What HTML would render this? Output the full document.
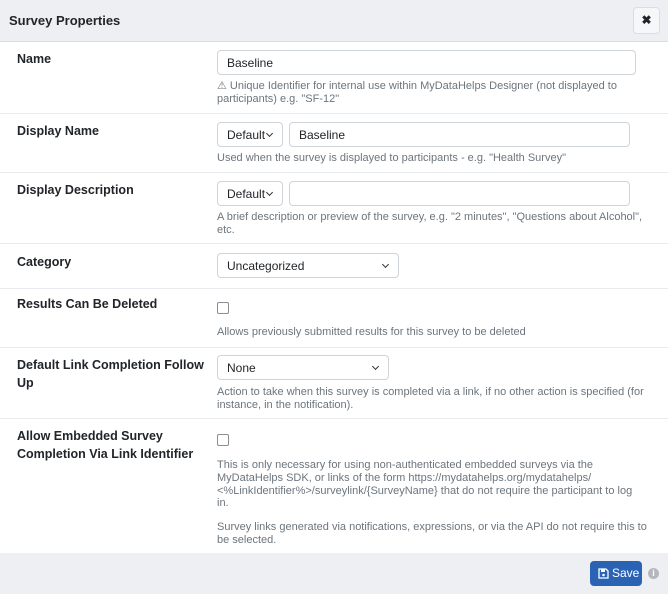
<!DOCTYPE html>
<html><head><style>
*{box-sizing:border-box;margin:0;padding:0}
body{width:668px;height:594px;background:#fff;font-family:"Liberation Sans",sans-serif;position:relative;overflow:hidden;color:#212529}
.a{position:absolute}
.hdr{left:0;top:0;width:668px;height:42px;background:#eeeff3;border-bottom:1px solid #dcdde2}
.ftr{left:0;top:553px;width:668px;height:41px;background:#eeeff3}
.lbl{left:17px;font-weight:bold;font-size:12.5px;line-height:17.5px;color:#212529}
.inp{border:1px solid #ced4da;border-radius:4px;height:25px;font-size:12px;line-height:24px;padding-left:9px;background:#fff}
.sel::after{content:"";position:absolute;right:10px;top:8px;width:4px;height:4px;border-right:1.5px solid #333;border-bottom:1.5px solid #333;transform:rotate(45deg)}
.hlp{left:217px;font-size:11px;line-height:12.8px;color:#6c757d;width:450px;white-space:nowrap}
.sep{left:0;width:668px;height:1px;background:#e9eaee}
.cb{left:217px;width:12px;height:12px;border:1px solid #8a8d92;border-radius:2px}
</style></head><body>
<div class="a hdr"></div>
<div class="a" style="left:9px;top:13px;font-weight:bold;font-size:13px">Survey Properties</div>
<div class="a" style="left:633px;top:7px;width:27px;height:27px;border:1px solid #dcdde2;border-radius:4px;background:#f6f7f9;font-size:12px;font-weight:bold;text-align:center;line-height:25px">✖</div>

<div class="a lbl" style="top:51px">Name</div>
<div class="a inp" style="left:217px;top:50px;width:419px">Baseline</div>
<div class="a hlp" style="top:80px">⚠ Unique Identifier for internal use within MyDataHelps Designer (not displayed to<br>participants) e.g. "SF-12"</div>
<div class="a sep" style="top:113px"></div>

<div class="a lbl" style="top:123px">Display Name</div>
<div class="a inp sel" style="left:217px;top:122px;width:66px">Default</div>
<div class="a inp" style="left:289px;top:122px;width:341px">Baseline</div>
<div class="a hlp" style="top:152px">Used when the survey is displayed to participants - e.g. "Health Survey"</div>
<div class="a sep" style="top:172px"></div>

<div class="a lbl" style="top:182px">Display Description</div>
<div class="a inp sel" style="left:217px;top:181px;width:66px">Default</div>
<div class="a inp" style="left:289px;top:181px;width:341px"></div>
<div class="a hlp" style="top:211px">A brief description or preview of the survey, e.g. "2 minutes", "Questions about Alcohol",<br>etc.</div>
<div class="a sep" style="top:243px"></div>

<div class="a lbl" style="top:254px">Category</div>
<div class="a inp sel" style="left:217px;top:253px;width:182px">Uncategorized</div>
<div class="a sep" style="top:288px"></div>

<div class="a lbl" style="top:296px">Results Can Be Deleted</div>
<div class="a cb" style="top:302px"></div>
<div class="a hlp" style="top:326px">Allows previously submitted results for this survey to be deleted</div>
<div class="a sep" style="top:347px"></div>

<div class="a lbl" style="top:357px">Default Link Completion Follow<br>Up</div>
<div class="a inp sel" style="left:217px;top:355px;width:172px">None</div>
<div class="a hlp" style="top:386px">Action to take when this survey is completed via a link, if no other action is specified (for<br>instance, in the notification).</div>
<div class="a sep" style="top:418px"></div>

<div class="a lbl" style="top:428px">Allow Embedded Survey<br>Completion Via Link Identifier</div>
<div class="a cb" style="top:434px"></div>
<div class="a hlp" style="top:459px">This is only necessary for using non-authenticated embedded surveys via the<br>MyDataHelps SDK, or links of the form https://mydatahelps.org/mydatahelps/<br>&lt;%LinkIdentifier%&gt;/surveylink/{SurveyName} that do not require the participant to log<br>in.</div>
<div class="a hlp" style="top:521px">Survey links generated via notifications, expressions, or via the API do not require this to<br>be selected.</div>

<div class="a ftr"></div>
<div class="a" style="left:590px;top:561px;width:52px;height:25px;background:#2b63b4;border-radius:4px;color:#fff;font-size:12px;line-height:25px;padding-left:22px">Save</div>
<svg class="a" style="left:598px;top:568px" width="11" height="11" viewBox="0 0 11 11"><path d="M1 1h7l2 2v7H1z" fill="none" stroke="#fff" stroke-width="1.3"/><rect x="3" y="1.5" width="4" height="2.5" fill="#fff"/><circle cx="5.5" cy="7" r="1.3" fill="#fff"/></svg>
<div class="a" style="left:648px;top:568px;width:11px;height:11px;border-radius:50%;background:#b5b7bc;color:#fff;font-size:9px;font-weight:bold;text-align:center;line-height:11px">i</div>
</body></html>
